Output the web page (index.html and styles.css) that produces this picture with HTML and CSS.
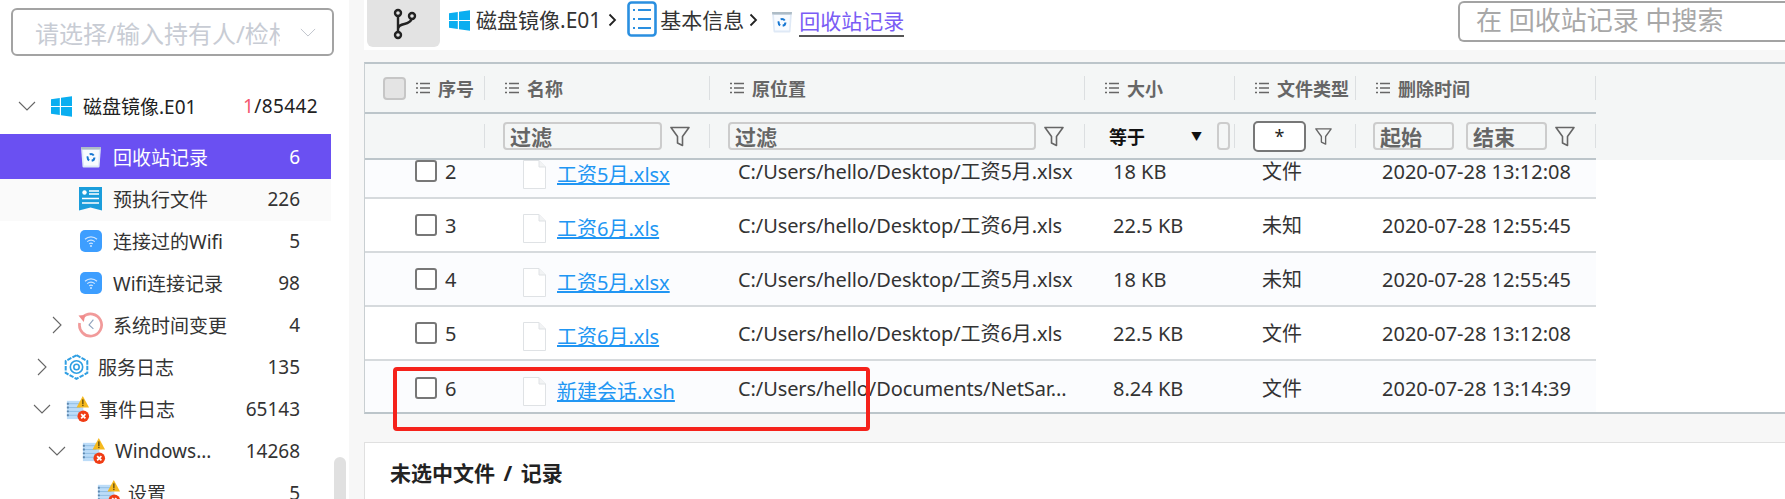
FILE: index.html
```html
<!DOCTYPE html>
<html lang="zh-CN">
<head>
<meta charset="utf-8">
<title>回收站记录</title>
<link rel="stylesheet" href="styles.css">
</head>
<body>
<svg class="defs" width="0" height="0" aria-hidden="true">
  <defs>
    <symbol id="win" viewBox="0 0 21 21"><path d="M0 3.2 8.8 2V10H0ZM10 1.8 21 .2V10H10ZM0 11H8.8V19L0 17.8ZM10 11H21V20.8L10 19.2Z" fill="#0aaef0"/></symbol>
    <symbol id="bin" viewBox="0 0 22 22"><path d="M1 1H21L19.500 20.500Q19.400 21.500 18.500 21.500H3.500Q2.600 21.500 2.500 20.500Z" fill="#dfe9f6"/><path d="M3 4H19L18 19.500H4Z" fill="#f8fbff"/><path d="M1 1H21L20.700 3.500H1.300Z" fill="#aebcc6"/><circle cx="11" cy="11.500" r="3.400" fill="none" stroke="#1677d2" stroke-width="2" stroke-dasharray="4.500 2.600"/></symbol>
    <symbol id="doc" viewBox="0 0 23 24"><path d="M0 0H23V23.5L11.5 20.5 0 23.5Z" fill="#1a9ddb"/><circle cx="5.5" cy="5.5" r="2.2" fill="#fff"/><path d="M10 4H20M10 7H20M3 11.5H20M3 16H20" stroke="#fff" stroke-width="1.4"/></symbol>
    <symbol id="wifi" viewBox="0 0 22 22"><rect width="22" height="22" rx="5" fill="#3d9eff"/><path d="M5 9.2C8.500 6 13.500 6 17 9.200M7.200 11.600C9.500 9.700 12.500 9.700 14.800 11.600M9.200 13.800C10.300 13 11.700 13 12.800 13.800" fill="none" stroke="#cfe6ff" stroke-width="1.2"/><circle cx="11" cy="16" r="1" fill="#cfe6ff"/></symbol>
    <symbol id="clock" viewBox="0 0 26 26"><path d="M5 4.800A11.500 11.500 0 1 1 1.700 11" fill="none" stroke="#f19a9a" stroke-width="2.800"/><path d="M.5 3 7.500 2.500 6 10Z" fill="#f08a8a"/><path d="M16 7.500 11.500 13 16 17" fill="none" stroke="#8fa3bd" stroke-width="1.200"/></symbol>
    <symbol id="gear" viewBox="0 0 24 26"><path d="M12 1.200 22.800 7V19L12 24.800 1.200 19V7Z" fill="none" stroke="#2f9fe3" stroke-width="2" stroke-dasharray="4.500 1.200"/><circle cx="12" cy="13" r="6.200" fill="none" stroke="#2f9fe3" stroke-width="1.600"/><circle cx="12" cy="13" r="2.700" fill="none" stroke="#2f9fe3" stroke-width="1.600"/></symbol>
    <symbol id="evt" viewBox="0 0 24 27"><rect x="1" y="5" width="17" height="19" fill="#bcdcf8"/><path d="M1 8H15M1 12H15M1 16H15M1 20H15" stroke="#8fbce3"/><path d="M1 8H3M1 12H3M1 16H3M1 20H3" stroke="#5d86ad" stroke-width="2"/><path d="M17.500 0 24 12H11Z" fill="#f5b91e"/><rect x="16.800" y="3.500" width="1.500" height="4.800" fill="#6b5310"/><rect x="16.800" y="9" width="1.500" height="1.500" fill="#6b5310"/><circle cx="18" cy="21" r="6" fill="#f03c14"/><path d="M15.800 18.800 20.200 23.200M20.200 18.800 15.800 23.200" stroke="#fff" stroke-width="1.800"/></symbol>
    <symbol id="file" viewBox="0 0 23 29"><path d="M.5.500H16L22.500 7V28.500H.5Z" fill="#fff" stroke="#dfe2e5"/><path d="M16 .5V7H22.500" fill="#f2f3f4" stroke="#dfe2e5"/></symbol>
    <symbol id="funnel" viewBox="0 0 20 21"><path d="M1 1.500H19L12.500 10.500V19.500L7.500 17V10.500Z" fill="none" stroke="#666" stroke-width="1.600" stroke-linejoin="round"/></symbol>
    <symbol id="menu" viewBox="0 0 14 12"><path d="M0 1.500H2M4 1.500H14M0 6H2M4 6H14M0 10.500H2M4 10.500H14" stroke="#666" stroke-width="1.600"/></symbol>
    <symbol id="down" viewBox="0 0 18 10"><path d="M1 1 9 9 17 1" fill="none" stroke="currentColor" stroke-width="1.100"/></symbol>
    <symbol id="right" viewBox="0 0 10 18"><path d="M1 1 9 9 1 17" fill="none" stroke="currentColor" stroke-width="1.100"/></symbol>
    <symbol id="sep" viewBox="0 0 9 14"><path d="M1.500 1.500 7 7 1.500 12.500" fill="none" stroke="#222" stroke-width="1.800"/></symbol>
  </defs>
</svg>

<div class="app">
  <aside class="side">
    <div class="picker">
      <span class="picker-text">请选择/输入持有人/检材</span>
      <svg class="picker-arrow"><use href="#down"/></svg>
    </div>
    <div class="tree">
      <div class="node node-root">
        <svg class="tw tw-down"><use href="#down"/></svg>
        <svg class="ic ic-win"><use href="#win"/></svg>
        <span class="label">磁盘镜像.E01</span>
        <span class="num num-root"><span class="red">1</span>/85442</span>
      </div>
      <div class="node node-on d2">
        <svg class="ic ic-22"><use href="#bin"/></svg>
        <span class="label">回收站记录</span><span class="num">6</span>
      </div>
      <div class="node node-alt d2">
        <svg class="ic ic-doc"><use href="#doc"/></svg>
        <span class="label">预执行文件</span><span class="num">226</span>
      </div>
      <div class="node d2">
        <svg class="ic ic-22"><use href="#wifi"/></svg>
        <span class="label">连接过的Wifi</span><span class="num">5</span>
      </div>
      <div class="node d2">
        <svg class="ic ic-22"><use href="#wifi"/></svg>
        <span class="label">Wifi连接记录</span><span class="num">98</span>
      </div>
      <div class="node d2b">
        <svg class="tw tw-right"><use href="#right"/></svg>
        <svg class="ic ic-26"><use href="#clock"/></svg>
        <span class="label">系统时间变更</span><span class="num">4</span>
      </div>
      <div class="node d1">
        <svg class="tw tw-right"><use href="#right"/></svg>
        <svg class="ic ic-26"><use href="#gear"/></svg>
        <span class="label">服务日志</span><span class="num">135</span>
      </div>
      <div class="node d1c">
        <svg class="tw tw-down"><use href="#down"/></svg>
        <svg class="ic ic-26"><use href="#evt"/></svg>
        <span class="label">事件日志</span><span class="num">65143</span>
      </div>
      <div class="node d2c">
        <svg class="tw tw-down"><use href="#down"/></svg>
        <svg class="ic ic-26"><use href="#evt"/></svg>
        <span class="label">Windows...</span><span class="num">14268</span>
      </div>
      <div class="node d3">
        <svg class="ic ic-26"><use href="#evt"/></svg>
        <span class="label">设置</span><span class="num">5</span>
      </div>
    </div>
    <div class="scroll-thumb"></div>
  </aside>

  <main class="main">
    <header class="topbar">
      <button class="branch-btn" type="button" aria-label="分支">
        <svg width="26" height="34" viewBox="0 0 26 34"><g fill="none" stroke="#222" stroke-width="2.400"><circle cx="7" cy="6" r="3"/><circle cx="7" cy="28" r="3"/><circle cx="21" cy="9" r="3"/><path d="M7 9V25M7 22C7 15 19 19 20.500 12"/></g></svg>
      </button>
      <nav class="crumbs">
        <svg class="cr-win"><use href="#win"/></svg>
        <span class="cr-text">磁盘镜像.E01</span>
        <svg class="cr-sep"><use href="#sep"/></svg>
        <svg class="cr-list" viewBox="0 0 30 36"><rect x="1.500" y="1.500" width="27" height="33" rx="3" fill="#fff" stroke="#2a8fe0" stroke-width="2.600"/><path d="M6 9H8M11 9H24M6 18H8M11 18H24M6 27H8M11 27H24" stroke="#2a8fe0" stroke-width="1.800"/></svg>
        <span class="cr-text">基本信息</span>
        <svg class="cr-sep cr-sep-last"><use href="#sep"/></svg>
        <svg class="cr-bin"><use href="#bin"/></svg>
        <span class="cr-link">回收站记录</span>
      </nav>
      <div class="search">在 回收站记录 中搜索</div>
    </header>

    <section class="table">
      <div class="thead">
        <div class="tr-head">
          <div class="th th-seq"><span class="box-head"></span><svg class="menu"><use href="#menu"/></svg>序号</div>
          <div class="th"><svg class="menu"><use href="#menu"/></svg>名称</div>
          <div class="th"><svg class="menu"><use href="#menu"/></svg>原位置</div>
          <div class="th"><svg class="menu"><use href="#menu"/></svg>大小</div>
          <div class="th"><svg class="menu"><use href="#menu"/></svg>文件类型</div>
          <div class="th"><svg class="menu"><use href="#menu"/></svg>删除时间</div>
        </div>
        <div class="tr-filter">
          <div class="tf"></div>
          <div class="tf tf-name"><span class="inp inp-name">过滤</span><svg class="funnel"><use href="#funnel"/></svg></div>
          <div class="tf tf-path"><span class="inp inp-path">过滤</span><svg class="funnel"><use href="#funnel"/></svg></div>
          <div class="tf tf-size"><span class="op">等于</span><span class="op-arrow">▼</span><span class="inp inp-tiny"></span></div>
          <div class="tf tf-type"><span class="star">*</span><svg class="funnel"><use href="#funnel"/></svg></div>
          <div class="tf tf-time"><span class="inp inp-date">起始</span><span class="inp inp-date">结束</span><svg class="funnel"><use href="#funnel"/></svg></div>
        </div>
      </div>
      <div class="tbody">
        <div class="row row-cut">
          <div class="c c-seq"><span class="box"></span>2</div>
          <div class="c c-name"><svg class="file"><use href="#file"/></svg><a class="link">工资5月.xlsx</a></div>
          <div class="c c-path">C:/Users/hello/Desktop/工资5月.xlsx</div>
          <div class="c c-size">18 KB</div>
          <div class="c c-type">文件</div>
          <div class="c c-time">2020-07-28 13:12:08</div>
        </div>
        <div class="row">
          <div class="c c-seq"><span class="box"></span>3</div>
          <div class="c c-name"><svg class="file"><use href="#file"/></svg><a class="link">工资6月.xls</a></div>
          <div class="c c-path">C:/Users/hello/Desktop/工资6月.xls</div>
          <div class="c c-size">22.5 KB</div>
          <div class="c c-type">未知</div>
          <div class="c c-time">2020-07-28 12:55:45</div>
        </div>
        <div class="row row-tint">
          <div class="c c-seq"><span class="box"></span>4</div>
          <div class="c c-name"><svg class="file"><use href="#file"/></svg><a class="link">工资5月.xlsx</a></div>
          <div class="c c-path">C:/Users/hello/Desktop/工资5月.xlsx</div>
          <div class="c c-size">18 KB</div>
          <div class="c c-type">未知</div>
          <div class="c c-time">2020-07-28 12:55:45</div>
        </div>
        <div class="row">
          <div class="c c-seq"><span class="box"></span>5</div>
          <div class="c c-name"><svg class="file"><use href="#file"/></svg><a class="link">工资6月.xls</a></div>
          <div class="c c-path">C:/Users/hello/Desktop/工资6月.xls</div>
          <div class="c c-size">22.5 KB</div>
          <div class="c c-type">文件</div>
          <div class="c c-time">2020-07-28 13:12:08</div>
        </div>
        <div class="row row-tint row-last">
          <div class="c c-seq"><span class="box"></span>6</div>
          <div class="c c-name"><svg class="file"><use href="#file"/></svg><a class="link">新建会话.xsh</a></div>
          <div class="c c-path">C:/Users/hello/Documents/NetSar...</div>
          <div class="c c-size">8.24 KB</div>
          <div class="c c-type">文件</div>
          <div class="c c-time">2020-07-28 13:14:39</div>
        </div>
      </div>
    </section>

    <section class="detail">未选中文件 / 记录</section>
    <div class="redbox"></div>
  </main>
</div>
</body>
</html>
```

FILE: styles.css
```css
* { box-sizing: border-box; }
html, body { margin: 0; height: 100%; overflow: hidden; }
body {
  font-family: "Noto Sans", "Noto Sans CJK SC", sans-serif;
  font-size: 19px;
  color: #333;
  background: #fff;
}
.defs { position: absolute; }
.app { display: flex; height: 499px; overflow: hidden; }

/* sidebar */
.side { position: relative; width: 349px; flex: none; background: #fff; overflow: hidden; }
.picker {
  display: flex; align-items: center;
  width: 323px; height: 48px; margin: 8px 0 0 11px;
  padding-left: 22px;
  border: 2px solid #a3a3a3; border-radius: 6px;
}
.picker-text {
  width: 245px; overflow: hidden; white-space: nowrap;
  font-size: 24px; color: #c8ccd4;
}
.picker-arrow { width: 16px; height: 9px; margin-left: 20px; color: #c0c4cc; }
.tree { width: 331px; margin-top: 25px; }
.node { display: flex; align-items: center; height: 42px; padding-bottom: 2px; color: #333; white-space: nowrap; }
.node-root { height: 53px; padding: 0 0 3px 18px; color: #222; }
.node-root .ic-win { margin-left: 15px; }
.node-on { height: 45px; padding-bottom: 0; background: #6a50f2; color: #fff; }
.node-alt { background: #fafafa; }
.label { flex: 1; margin-left: 11px; }
.num { width: auto; margin-right: 31px; }
.num-root { margin-right: 13px; letter-spacing: .4px; }
.red { color: #f4566e; }
.ic { flex: none; }
.ic-win { width: 21px; height: 21px; }
.ic-22 { width: 22px; height: 22px; }
.ic-doc { width: 23px; height: 24px; }
.ic-26 { width: 25px; height: 26px; }
.tw { flex: none; color: #666; }
.tw-down { width: 18px; height: 10px; }
.tw-right { width: 10px; height: 18px; }
.d1 { padding-left: 37px; }
.d1 .ic { margin-left: 17px; }
.d1 .label { margin-left: 9px; }
.d1c { padding-left: 33px; }
.d1c .ic { margin-left: 14px; }
.d1c .label { margin-left: 9px; }
.d2 { padding-left: 80px; }
.node-alt.d2 { padding-left: 79px; }
.d2b { padding-left: 52px; }
.d2b .ic { margin-left: 16px; }
.d2b .label { margin-left: 10px; }
.d2c { padding-left: 48px; }
.d2c .ic { margin-left: 15px; }
.d2c .label { margin-left: 9px; }
.d3 { padding-left: 96px; }
.d3 .label { margin-left: 7px; }
.scroll-thumb {
  position: absolute; left: 334px; top: 457px;
  width: 12px; height: 60px; border-radius: 6px; background: #e0e0e0;
}

/* main */
.main { position: relative; flex: 1; min-width: 0; background: #f7f7f7; padding-left: 15px; }
.topbar { display: flex; align-items: flex-start; height: 50px; background: #fff; padding-left: 3px; }
.branch-btn {
  display: flex; align-items: center; justify-content: center;
  width: 73px; height: 47px; padding: 0;
  background: #e3e3e3; border: 0; border-radius: 0 0 6px 6px;
}
.crumbs { display: flex; align-items: center; height: 37px; margin-left: 9px; color: #333; }
.cr-win { width: 21px; height: 21px; margin: 3px 6px 0 0; }
.cr-text { font-size: 21px; line-height: 28px; margin-top: 3px; white-space: nowrap; }
.cr-sep { width: 9px; height: 14px; margin: 3px 13px 0 7px; }
.cr-sep-last { margin-left: 5px; }
.cr-list { width: 30px; height: 36px; margin: 0 3px 0 -3px; }
.cr-bin { width: 22px; height: 22px; margin: 6px 6px 0 0; }
.cr-link {
  font-size: 21px; color: #7a5cf5; line-height: 28px;
  border-bottom: 2px solid #555; margin-top: 6px;
}
.search {
  flex: none; width: 327px; height: 41px; margin: 1px 0 0 auto;
  padding-left: 16px;
  border: 2px solid #a3a3a3; border-right: 0; border-radius: 6px 0 0 6px;
  font-size: 26px; line-height: 35px; color: #a8a8a8; white-space: nowrap;
}

/* table */
.table { margin-top: 12px; border-left: 1px solid #c9cfd2; background: #fff; border-top: 2px solid #bcc5ca; border-bottom: 2px solid #bcc5ca; }
.thead { background: #f4f6f6; }
.tr-head, .tr-filter, .row {
  display: grid;
  grid-template-columns: 120px 225px 375px 150px 121px 240px;
  width: 1231px;
}
.tr-head { height: 50px; align-items: center; border-bottom: 2px solid #bcc5ca; font-weight: 700; font-size: 18px; color: #666; }
.th { display: flex; align-items: center; height: 24px; padding-left: 20px; border-right: 1px solid #dcdfe1; white-space: nowrap; }
.th-seq { padding-left: 18px; }
.box-head { width: 23px; height: 23px; flex: none; margin-right: 10px; background: #e4e4e4; border: 2px solid #c6c6c6; border-radius: 4px; }
.menu { width: 14px; height: 12px; flex: none; margin-right: 8px; }
.tr-filter { height: 46px; align-items: center; border-bottom: 2px solid #bcc5ca; }
.tf { display: flex; align-items: center; height: 24px; border-right: 1px solid #dcdfe1; }
.inp {
  display: block; flex: none; height: 28px; padding-left: 5px;
  border: 2px solid #ccc; border-radius: 4px;
  font-size: 21px; font-weight: 700; line-height: 26px; color: #666;
  background: #f4f6f6;
}
.funnel { width: 20px; height: 21px; flex: none; }
.tf-name { padding-left: 18px; }
.inp-name { width: 159px; margin-right: 8px; }
.tf-path { padding-left: 18px; }
.inp-path { width: 308px; margin-right: 8px; }
.tf-size { padding-left: 24px; }
.op { font-size: 18px; font-weight: 700; color: #111; }
.op-arrow { font-size: 11px; color: #111; margin: 0 0 0 46px; }
.inp-tiny { width: 13px; margin-left: 15px; padding: 0; }
.tf-type { padding-left: 18px; }
.star {
  display: flex; align-items: center; justify-content: center; flex: none;
  width: 53px; height: 31px; margin-right: 9px;
  border: 2px solid #777; border-radius: 5px; background: #fff;
  font-size: 18px; color: #222;
}
.tf-type .funnel { width: 17px; }
.tf-time { padding-left: 17px; }
.inp-date { width: 81px; margin-right: 12px; }
.tf-time .inp-date + .funnel { margin-left: -4px; }

.row { height: 54px; padding-top: 15px; border-bottom: 2px solid #d6dadd; background: #fff; color: #333; font-size: 20px; }
.row-cut { height: 39px; padding-top: 0; background: #fbfcfe; }
.row-tint { background: #fbfcfe; }
.row-last { height: 51px; padding-top: 16px; border-bottom: 0; }
.c { display: flex; align-items: flex-start; line-height: 24px; height: 30px; white-space: nowrap; }
.box { flex: none; width: 22px; height: 22px; margin-right: 8px; background: #fff; border: 2px solid #777; border-radius: 3px; }
.c-seq { padding-left: 50px; }
.c-name { padding-left: 38px; }
.file { flex: none; width: 23px; height: 29px; margin-right: 11px; }
.link { color: #2196f3; text-decoration: underline; margin-top: 3px; line-height: 24px; }
.c-path { padding-left: 28px; letter-spacing: -.1px; }
.c-size { padding-left: 28px; }
.c-type { padding-left: 27px; }
.c-time { padding-left: 26px; }

/* detail */
.detail {
  height: 60px; margin-top: 28px; padding: 15px 0 0 25px;
  background: #fff; border: 1px solid #e0e0e0; border-width: 1px 0 0 1px;
  font-size: 21px; font-weight: 700; line-height: 30px; color: #222; word-spacing: 3px;
}
.redbox {
  position: absolute; left: 44px; top: 367px;
  width: 477px; height: 64px;
  border: 4px solid #f5221b; border-radius: 4px;
}
```
